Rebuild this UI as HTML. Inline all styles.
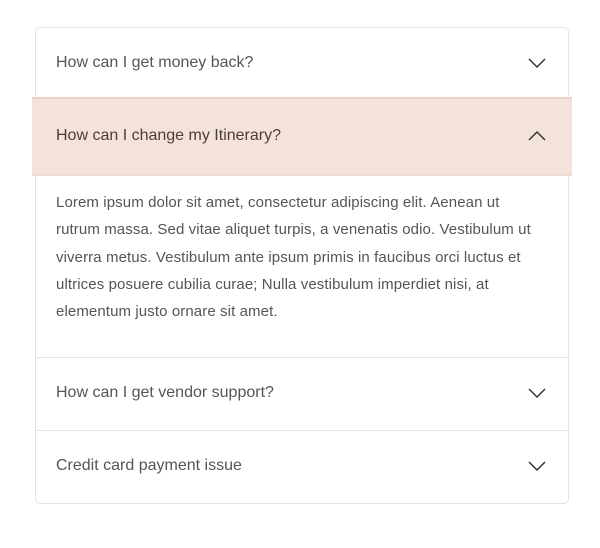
<!DOCTYPE html>
<html><head><style>
body{margin:0;background:#fff;width:600px;height:548px;position:relative;font-family:"Liberation Sans",sans-serif;}
.card{position:absolute;left:35px;top:27px;width:532px;height:475px;border:1px solid #e3e3e3;border-radius:5px;}
.q{position:absolute;left:56px;font-size:16px;color:#555;}
.hl{position:absolute;left:32px;top:97px;width:540px;height:79px;background:#f4e3da;border-top:2px solid #ead3c6;border-bottom:2px solid #efdcd2;box-sizing:border-box;}
.sep{position:absolute;left:36px;width:532px;height:1px;background:#e3e3e3;}
.body{position:absolute;left:56px;top:189px;width:500px;font-size:15px;letter-spacing:0.1px;line-height:27.3px;color:#555;white-space:nowrap;}
svg{position:absolute;}
</style></head><body>
<div class="card"></div>
<div class="hl"></div>
<div class="q" style="top:54px">How can I get money back?</div>
<div class="q" style="top:127px;color:#4a3e38">How can I change my Itinerary?</div>
<div class="body">Lorem ipsum dolor sit amet, consectetur adipiscing elit. Aenean ut<br>rutrum massa. Sed vitae aliquet turpis, a venenatis odio. Vestibulum ut<br>viverra metus. Vestibulum ante ipsum primis in faucibus orci luctus et<br>ultrices posuere cubilia curae; Nulla vestibulum imperdiet nisi, at<br>elementum justo ornare sit amet.</div>
<div class="sep" style="top:357px"></div>
<div class="q" style="top:384px">How can I get vendor support?</div>
<div class="sep" style="top:430px"></div>
<div class="q" style="top:457px">Credit card payment issue</div>
<svg style="left:528px;top:57px" width="18" height="12"><path d="M1 2 L9 10 L17 2" fill="none" stroke="#333" stroke-width="1.5"/></svg>
<svg style="left:528px;top:130px" width="18" height="12"><path d="M1 10 L9 2 L17 10" fill="none" stroke="#333" stroke-width="1.5"/></svg>
<svg style="left:528px;top:387px" width="18" height="12"><path d="M1 2 L9 10 L17 2" fill="none" stroke="#333" stroke-width="1.5"/></svg>
<svg style="left:528px;top:460px" width="18" height="12"><path d="M1 2 L9 10 L17 2" fill="none" stroke="#333" stroke-width="1.5"/></svg>
</body></html>
